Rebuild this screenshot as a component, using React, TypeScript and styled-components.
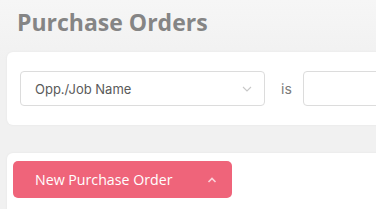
import React from "react";
import styled, { createGlobalStyle } from "styled-components";

const Global = createGlobalStyle`
  html, body { margin: 0; padding: 0; overflow: hidden; }
  body { background: #f1f1f1; font-family: "Open Sans", "Noto Sans", sans-serif; }
`;

const Page = styled.div`
  width: 100vw;
  height: 100vh;
  overflow: hidden;
  box-sizing: border-box;
  padding: 0 0 0 7px;
  background: linear-gradient(#f6f6f6, #f1f1f1 60px);
`;

const Inner = styled.div`
  width: 740px;
`;

const Title = styled.h1`
  margin: 0;
  padding: 6px 0 0 10px;
  height: 52px;
  box-sizing: border-box;
  font-size: 23px;
  line-height: 32px;
  font-weight: 700;
  color: #858585;
`;

const Card = styled.div<{ $pad: string }>`
  background: #fff;
  border-radius: 6px;
  box-shadow: 0 0 3px rgba(0, 0, 0, 0.05);
  padding: ${(p) => p.$pad};
`;

const FilterRow = styled.div`
  display: flex;
  align-items: center;
  gap: 16px;
`;

const Select = styled.div`
  width: 245px;
  height: 35px;
  box-sizing: border-box;
  border: 1px solid #dcdcdc;
  border-radius: 4px;
  display: flex;
  align-items: center;
  justify-content: space-between;
  padding: 0 12px 0 14px;
  font-family: "Inter", "Noto Sans", sans-serif;
  font-size: 13px;
  color: #5a5a5a;
`;

const Is = styled.span`
  font-family: "Inter", "Noto Sans", sans-serif;
  font-size: 14px;
  color: #7a7a7a;
  margin-right: -5px;
`;

const TextInput = styled.div`
  width: 300px;
  height: 35px;
  box-sizing: border-box;
  border: 1px solid #dcdcdc;
  border-radius: 4px;
`;

const Gap = styled.div`
  height: 28px;
`;

const Button = styled.button`
  width: 219px;
  height: 37px;
  border: none;
  border-radius: 5px;
  background: #ef647a;
  color: #fff;
  font-family: "Open Sans", sans-serif;
  font-size: 14.2px;
  display: flex;
  align-items: center;
  justify-content: space-between;
  padding: 0 15px 0 22px;
  box-sizing: border-box;
`;

export default function App() {
  return (
    <>
      <Global />
      <Page>
        <Inner>
          <Title>Purchase Orders</Title>
          <Card $pad="19px 13px">
            <FilterRow>
              <Select>
                <span>Opp./Job Name</span>
                <svg width="10" height="6" viewBox="0 0 10 6">
                  <path d="M1 1l4 4 4-4" fill="none" stroke="#c8c8c8" strokeWidth="1.1" />
                </svg>
              </Select>
              <Is>is</Is>
              <TextInput />
            </FilterRow>
          </Card>
          <Gap />
          <Card $pad="8px 6px 20px">
            <Button>
              <span>New Purchase Order</span>
              <svg width="10" height="6" viewBox="0 0 10 6">
                <path d="M1.5 5l3.5-3.5 3.5 3.5" fill="none" stroke="#fbd3da" strokeWidth="1.6" />
              </svg>
            </Button>
          </Card>
        </Inner>
      </Page>
    </>
  );
}
